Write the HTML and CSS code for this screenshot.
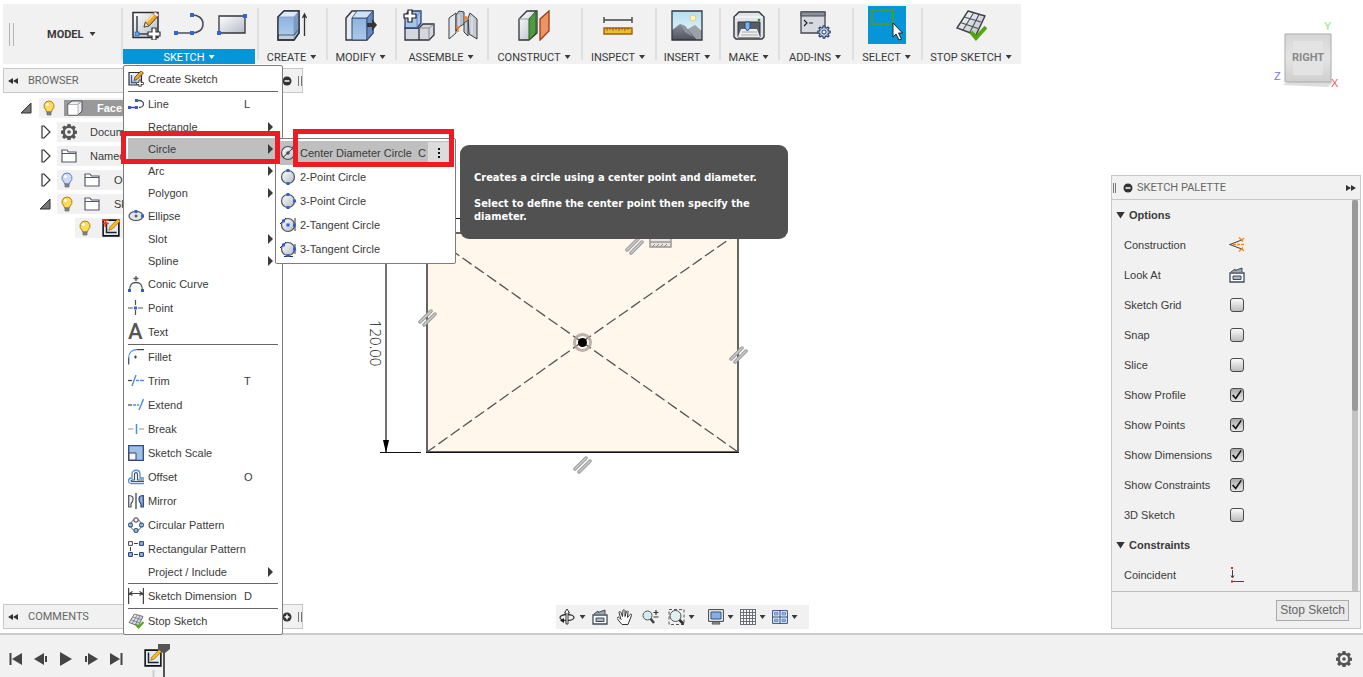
FILE: index.html
```html
<!DOCTYPE html>
<html lang="en">
<head>
<meta charset="utf-8">
<title>Sketch workspace</title>
<link rel="stylesheet" href="styles.css">
</head>
<body>
<svg class="sprite" aria-hidden="true">
  <defs>
    <linearGradient id="steel" x1="0" y1="0" x2="1" y2="1"><stop offset="0" stop-color="#fff"/><stop offset="1" stop-color="#b4bac6"/></linearGradient>
    <linearGradient id="blue" x1="0" y1="0" x2="0" y2="1"><stop offset="0" stop-color="#8fb3df"/><stop offset="1" stop-color="#a9c9e8"/></linearGradient>
    <linearGradient id="sky" x1="0" y1="0" x2="0" y2="1"><stop offset="0" stop-color="#b5def2"/><stop offset="1" stop-color="#eef8fb"/></linearGradient>
    <linearGradient id="rock" x1="0" y1="0" x2="0" y2="1"><stop offset="0" stop-color="#8a8f99"/><stop offset="1" stop-color="#4d515b"/></linearGradient>
    <symbol id="sketch" viewBox="0 0 30 30">
      <path d="M2 2.500h25v25H2z" fill="url(#steel)" stroke="#2c2f36" stroke-width="1.500"/>
      <path d="M6 6v18h13" fill="none" stroke="#39404c" stroke-width="1.500"/>
      <path d="M13 17l1.500-5L24 2l4 3-9.500 10.500z" fill="#f2a52b" stroke="#57401c"/>
      <path d="M15 12l9-9" stroke="#ffe08a" stroke-width="2"/><path d="M22 4l4 3 2-2-3.500-3z" fill="#eee" stroke="#8a5a4a" stroke-width=".6"/>
      <path d="M13 17l1.500-5 3.500 4z" fill="#f6dcc0" stroke="#333" stroke-width=".7"/>
      <rect x="4" y="22" width="4" height="4" fill="#5fa8ef" stroke="#1f5fae" stroke-width=".7"/>
      <path d="M21 18h4v4h4v4h-4v4h-4v-4h-4v-4h4z" fill="#fff" stroke="#333" stroke-width="1.200"/>
    </symbol>
    <symbol id="msketch" viewBox="0 0 16 16">
      <path d="M1 1.500h12.500V14H1z" fill="url(#steel)" stroke="#2c2f36" stroke-width="1.200"/>
      <path d="M3.500 4v7.500h5" fill="none" stroke="#2f5f9f" stroke-width="1.300"/>
      <path d="M6 9.500l1-3.500 6-6 2.500 2-6.500 6.500z" fill="#f2a52b" stroke="#57401c" stroke-width=".8"/>
      <path d="M11 9h2v2.500h2.500v2H13V16h-2v-2.500H8.500v-2H11z" fill="#fff" stroke="#333" stroke-width=".8"/>
    </symbol>
    <symbol id="line" viewBox="0 0 30 24">
      <path d="M2 20h16c6 0 11-3 11-9s-5-9-11-9" fill="none" stroke="#4a4d55" stroke-width="1.600"/>
      <path d="M0 18h4v4H0zM16 18h4v4h-4zM16 0h4v4h-4z" fill="#3565cf"/>
    </symbol>
    <symbol id="mline" viewBox="0 0 16 12">
      <path d="M1 9.500h8M8 2.500h3c3 0 4.500 2 4.500 3.500S14 9.500 11 9.500" fill="none" stroke="#4a4d55" stroke-width="1.300"/>
      <path d="M0 8h3v3H0zM7 8h3v3H7zM7 1h3v3H7z" fill="#3060cf"/>
    </symbol>
    <symbol id="rect" viewBox="0 0 30 24">
      <path d="M2 3h26v17H2z" fill="url(#steel)" stroke="#33363d" stroke-width="1.300"/><path d="M26 1h4v4h-4zM0 18h4v4H0z" fill="#3565cf"/>
    </symbol>
    <symbol id="create" viewBox="0 0 32 32">
      <path d="M2 8l6-6h15v22l-5 7H2z" fill="#c4cedd" stroke="#30343c" stroke-width="1.300"/>
      <path d="M2 8h16v17H2z" fill="url(#blue)"/><path d="M2 8l6-6h15l-5 6z" fill="#dbe9f8"/><path d="M18 8l5-6v20l-5 6z" fill="#7b9bc4"/>
      <path d="M2 8h16l5-6M18 8v22" fill="none" stroke="#8097b8" stroke-width=".8"/><path d="M2 26h16l5-6" fill="none" stroke="#405a86"/><path d="M2 8l6-6h15v22l-5 7H2z" fill="none" stroke="#30343c" stroke-width="1.300"/>
      <path d="M28.500 27V6m-2 3l2-4 2 4" fill="none" stroke="#333" stroke-width="1.300"/>
    </symbol>
    <symbol id="modify" viewBox="0 0 32 32">
      <path d="M1 9l6-7h21v22l-6 7H1z" fill="#e8ebf0" stroke="#30343c" stroke-width="1.400"/>
      <path d="M7 9h15v22H7z" fill="url(#blue)" stroke="#2c4775"/><path d="M7 9l5-7h16l-6 7z" fill="#cfe1f4" stroke="#2c4775" stroke-width=".8"/><path d="M22 9l6-7v22l-6 7z" fill="#6688bb" stroke="#2c4775" stroke-width=".8"/>
      <path d="M22 14h5v-4l5 6-5 6v-4h-5z" fill="#333"/>
    </symbol>
    <symbol id="assemble" viewBox="0 0 32 32">
      <path d="M2 19h14v12H2zM16 19l4-4h11v11l-5 5H16z" fill="#d4d7dd" stroke="#30343c" stroke-width="1.300"/>
      <path d="M16 19h10v12M26 19l5-4" fill="none" stroke="#777" stroke-width=".8"/>
      <path d="M2 19V6l4-4h12v12l-4 5z" fill="#a8c4e9" stroke="#29416f" stroke-width="1.300"/><path d="M14 7v12M14 7l4-5" stroke="#5b7cae" stroke-width=".8"/>
      <path d="M5 1h4v4h4v4H9v4H5V9H1V5h4z" fill="#fff" stroke="#222" stroke-width="1.200"/>
    </symbol>
    <symbol id="joint" viewBox="0 0 32 32">
      <path d="M2 9l7-5v20l-7 6z" fill="#e7eaed" stroke="#3a3d44"/><path d="M9 6l3-4 5 1v12l-5 3-3 4z" fill="#b9bfc9" stroke="#3a3d44"/>
      <path d="M17 14l4-3v16l-4-4zM21 9l2-5 7 6v20l-8-5z" fill="#c4cad3" stroke="#3a3d44"/><path d="M12 6v11M25 8v17" stroke="#fff" opacity=".7"/>
      <path d="M11 18v5m-2-5h4M19 7v5m-2-3h4" stroke="#fa7d13" stroke-width="1.600"/>
    </symbol>
    <symbol id="construct" viewBox="0 0 34 32">
      <path d="M2 10l8-8h10v22l-8 7H2z" fill="url(#steel)" stroke="#30343c" stroke-width="1.300"/><path d="M12 10l7-8v22l-7 7z" fill="#4f9b41" stroke="#295c22"/><path d="M2 10h10" stroke="#999"/>
      <path d="M23 10l9-8v20l-9 9z" fill="#ee9464" stroke="#9a3d14" stroke-width="1.300"/>
    </symbol>
    <symbol id="inspect" viewBox="0 0 32 32">
      <path d="M2 11h28M2 8v6m28-6v6" stroke="#444" stroke-width="1.400"/><path d="M2 19h28v6H2z" fill="#edbd2c" stroke="#9a6410" stroke-width="1.400"/><path d="M5 19v3m3-3v2m3-2v3m3-3v2m3-2v3m3-3v2m3-2v3m3-3v2" stroke="#76510c" stroke-width=".8"/>
    </symbol>
    <symbol id="insert" viewBox="0 0 32 32">
      <path d="M1 2h30v29H1z" fill="url(#sky)"/><path d="M17 20l7-4 7 6v9H14z" fill="#9ba1a9"/><path d="M1 21l8-6 5 2 12 14H1z" fill="url(#rock)"/><path d="M9 15l5 2 8 11-8-5z" fill="#9095a0"/>
      <path d="M1 2h30v29H1z" fill="none" stroke="#32363e" stroke-width="1.300"/><circle cx="22" cy="9" r="3" fill="#fff4bf" stroke="#eeca62"/>
    </symbol>
    <symbol id="make" viewBox="0 0 32 32">
      <path d="M1 8l5-5h20l5 5v20l-2 2H3l-2-2z" fill="#e1e3e7" stroke="#30343c" stroke-width="1.400"/><path d="M2 8h28" stroke="#fff"/><circle cx="26" cy="11" r="1.300" fill="#278f27"/>
      <path d="M5 13h22v15H5z" fill="#595d66" stroke="#30343c"/><path d="M8 20h16l3 8H5z" fill="#eee"/><path d="M9 23h15m-16 3h17" stroke="#999" stroke-width=".8"/><path d="M12 13h5v6l-2.500 3-2.500-3z" fill="#7bb2e7" stroke="#224e83"/>
    </symbol>
    <symbol id="addins" viewBox="0 0 32 32">
      <path d="M2 3h24v21H2z" fill="#d6d9df" stroke="#454850" stroke-width="1.300"/><path d="M2 3h24v4H2z" fill="#8a909c" stroke="#454850"/><path d="M5 11l3 3-3 3m5-3h4" fill="none" stroke="#222" stroke-width="1.200"/>
      <use href="#gearshape" x="18" y="16" width="14" height="14" fill="#b6cdea" stroke="#2c4266" stroke-width="1.500"/><circle cx="25" cy="23" r="2" fill="#fff" stroke="#2c4266"/>
    </symbol>
    <symbol id="gearshape" viewBox="-1 -1 18 18"><path d="M7 0h2l.5 2.300 1.600.7 2-1.400 1.400 1.400-1.400 2 .7 1.600L16 7v2l-2.200.5-.7 1.600 1.400 2-1.400 1.400-2-1.400-1.600.7L9 16H7l-.5-2.200-1.600-.7-2 1.400-1.400-1.400 1.400-2-.7-1.600L0 9V7l2.200-.4.7-1.600-1.400-2 1.400-1.400 2 1.400 1.600-.7z"/></symbol>
    <symbol id="gear" viewBox="0 0 16 16"><path fill-rule="evenodd" fill="#555" d="M6.500 0h3l.4 2.100 1.100.5 1.900-1.200 2 2-1.300 1.800.5 1.200 2 .3v3l-2 .4-.5 1.100 1.300 1.800-2 2-1.900-1.200-1.100.5-.4 2h-3l-.4-2-1.100-.5L3.100 15l-2-2 1.200-1.800-.5-1.100L0 9.700v-3l1.900-.4.5-1.100L1.100 3.400l2-2L5 2.600l1.100-.5zM8 4a4 4 0 1 0 0 8 4 4 0 0 0 0-8z"/><circle cx="8" cy="8" r="1.800" fill="#555"/></symbol>
    <symbol id="select" viewBox="0 0 38 38"><path d="M4 4h21v14H4z" fill="none" stroke="#5a9a14" stroke-width="1.500"/><path d="M25 17v14l3-3 3 6 2.500-1-3-6h4z" fill="#fff" stroke="#222"/></symbol>
    <symbol id="stop" viewBox="0 0 32 32">
      <path d="M13 2l17 5-9 19L2 19z" fill="url(#steel)" stroke="#3b3f46" stroke-width="1.400"/><path d="M9 8l17 5M5.500 13.500L23 19.500M18.500 4L8 21m16-15.500L14.500 24" stroke="#4b4f56" stroke-width="1.100"/><path d="M16 23l5 6L31 18" fill="none" stroke="#54a60c" stroke-width="4"/>
    </symbol>
    <symbol id="ellipse" viewBox="0 0 16 16"><ellipse cx="8" cy="8" rx="7" ry="4.500" fill="#e2e6ed" stroke="#4c5057" stroke-width="1.200"/><path d="M8 6.500v3M6.500 8h3" stroke="#333"/><path d="M6.500 2h3v3h-3zM13 6.500h3v3h-3z" fill="#3060cf"/></symbol>
    <symbol id="conic" viewBox="0 0 16 16"><path d="M1.500 14C2 8 4 6.500 8 6.500S14 8 14.500 14M8 0v5M5.500 2.500h5" fill="none" stroke="#4c5057" stroke-width="1.300"/><path d="M0 13h3v3H0zM13 13h3v3h-3z" fill="#3060cf"/></symbol>
    <symbol id="point" viewBox="0 0 16 16"><path d="M0 8h5m5 0h5M7.500 0v5m0 5v5" stroke="#4c5057" stroke-width="1.200"/><path d="M6 6.500h3v3H6z" fill="#3060cf"/></symbol>
    <symbol id="fillet" viewBox="0 0 16 16"><path d="M.7 15.500V9M9 .7h7M6 8h3M7.500 6.500v3" stroke="#444" stroke-width="1.200"/><path d="M.7 9C.7 4 4 .7 9 .7" fill="none" stroke="#4a90e2" stroke-width="1.300"/></symbol>
    <symbol id="trim" viewBox="0 0 16 16"><path d="M0 7.500h4" stroke="#444" stroke-width="1.200"/><path d="M8 2L4 13M8 7.500h3m1 0h4" stroke="#4a90e2" stroke-width="1.400"/></symbol>
    <symbol id="extend" viewBox="0 0 16 16"><path d="M0 8h4" stroke="#444" stroke-width="1.200"/><path d="M5 8h3m1 0h2M15.500 2L11 13" stroke="#4a90e2" stroke-width="1.400"/></symbol>
    <symbol id="break" viewBox="0 0 16 16"><path d="M0 8h5.500m5.500 0h5" stroke="#bbb" stroke-width="1.300"/><path d="M8.500 3v10" stroke="#4a90e2" stroke-width="1.500"/></symbol>
    <symbol id="scale" viewBox="0 0 16 16"><path d="M.7.700h14.600v14.600H.7z" fill="#9fc0e5" stroke="#2b4b7d" stroke-width="1.300"/><path d="M1 8h7v7H1z" fill="#f6f7f8" stroke="#444"/></symbol>
    <symbol id="offset" viewBox="0 0 16 16"><path d="M16 14.500H3.500c-4 0-4-5.500 0-5.500H4V5c0-5 8-5 8 0v4h4" fill="none" stroke="#4a90e2" stroke-width="1.300"/><path d="M16 12.500H4.500c-2 0-2-1.500 0-1.500H6.500V5.500c0-2.500 3-2.500 3 0V11H16" fill="none" stroke="#4c5057" stroke-width="1.200"/></symbol>
    <symbol id="mirror" viewBox="0 0 16 16"><path d="M8 0v16" stroke="#444" stroke-width="1.300"/><path d="M.7 2.500c4 0 5 2 4 5.500L3 11v3H.7z" fill="#f3f3f3" stroke="#4c5057" stroke-width="1.200"/><path d="M15.300 2.500c-4 0-5 2-4 5.500L13 11v3h2.300z" fill="#8fb1de" stroke="#29416f" stroke-width="1.200"/></symbol>
    <symbol id="circular" viewBox="0 0 16 16"><circle cx="8" cy="8" r="5.500" fill="none" stroke="#666"/><g stroke="#333"><rect x="6" y="1" width="4" height="4" rx="1" fill="#fff"/><g fill="#8fb7e8" stroke="#233c69"><rect x=".5" y="6" width="4" height="4" rx="1.500"/><rect x="11.500" y="6" width="4" height="4" rx="1.500"/><rect x="6" y="11.500" width="4" height="4" rx="1.500"/></g></g></symbol>
    <symbol id="rectangular" viewBox="0 0 16 16"><path d="M6 2.500h4M6 13.500h4M2.500 6v4" stroke="#444"/><path d="M.6.600h3.800v3.800H.6z" fill="#fff" stroke="#444"/><g fill="#8fb7e8" stroke="#233c69"><path d="M11.600.600h3.800v3.800h-3.800zM.6 11.600h3.800v3.800H.6zM11.600 11.600h3.800v3.800h-3.800z"/></g></symbol>
    <symbol id="dimension" viewBox="0 0 16 16"><path d="M.6 0v16M15.400 0v16M2 5.500h12M4.500 3.500l-3 2 3 2M11.500 3.500l3 2-3 2" fill="none" stroke="#444" stroke-width="1.200"/></symbol>
    <symbol id="circ" viewBox="0 0 16 16"><circle cx="8" cy="8" r="6.500" fill="url(#steel)" stroke="#4b4f57" stroke-width="1.200"/></symbol>
    <symbol id="c0" viewBox="0 0 16 16"><use href="#circ"/><path d="M3 12.500L13 3M8 6v4M6 8h4" stroke="#333"/><path d="M12 1.500h3v3h-3z" fill="#3060cf"/></symbol>
    <symbol id="c2" viewBox="0 0 16 16"><use href="#circ"/><path d="M6.500 0h3v3h-3zM6.500 13h3v3h-3z" fill="#3060cf"/></symbol>
    <symbol id="c3" viewBox="0 0 16 16"><use href="#circ"/><path d="M6.500 0h3v3h-3zM6.500 13h3v3h-3zM13 6.500h3v3h-3z" fill="#3060cf"/></symbol>
    <symbol id="t2" viewBox="0 0 16 16"><use href="#circ"/><path d="M15 1v13M0 7l6-6" stroke="#333"/><path d="M6.500 6.500h3v3h-3zM13 6.500h3v3h-3zM2 2.500h3v3H2z" fill="#3060cf"/></symbol>
    <symbol id="t3" viewBox="0 0 16 16"><use href="#circ"/><path d="M15 3v10M0 7l6-6M4 15.500h9" stroke="#333"/><path d="M6.500 13h3v3h-3zM13 6.500h3v3h-3zM2 2.500h3v3H2z" fill="#3060cf"/></symbol>
    <symbol id="bulb" viewBox="0 0 12 16"><path d="M6 1a5 5 0 0 1 3 9l-.5 2h-5L3 10a5 5 0 0 1 3-9z" fill="var(--glow)" stroke="var(--rim)"/><circle cx="4.500" cy="4.500" r="1.500" fill="#fff"/><path d="M4 12h4v3H4z" fill="#889" stroke="#555" stroke-width=".6"/></symbol>
    <symbol id="folder" viewBox="0 0 16 14"><path d="M1 3V1h5l1.500 2H15v10H1z" fill="#fff" stroke="#555b66" stroke-width="1.200"/><path d="M1 4.500h14" stroke="#555b66"/></symbol>
    <symbol id="body" viewBox="0 0 16 16"><path d="M1 4l4-3h10v10l-4 4H1z" fill="#eef0f3" stroke="#4b4f57"/><path d="M1 4.500h10V15h-10z" fill="#fff" stroke="#888" stroke-width=".6"/><path d="M11 4l4-3" stroke="#888"/></symbol>
    <symbol id="mini" viewBox="0 0 16 16"><path d="M1 1h14v14H1z" fill="#dcecf8" stroke="#111" stroke-width="1.400"/><path d="M4 3v9h9" fill="none" stroke="#222" stroke-width="1.300"/><path d="M6 10l1-3 7-7 2 2-7 7z" fill="#fdb81e" stroke="#ad6b0d" stroke-width=".7"/></symbol>
    <symbol id="lookat" viewBox="0 0 16 16"><path d="M1 6h14v9H1z" fill="#fff" stroke="#434b57" stroke-width="1.300"/><path d="M4 9h8v3.500H4z" fill="#a9b7c9" stroke="#434b57"/><path d="M2 5l4-3v1.500L13 1v4" fill="#9ca7b5" stroke="#434b57"/></symbol>
    <symbol id="construction" viewBox="0 0 16 16"><path d="M14 2.500L1 7.500l13 5" fill="none" stroke="#555" stroke-width="1.300"/><path d="M4 7.500h12" stroke="#fa8412" stroke-width="1.300" stroke-dasharray="3 1"/><path d="M10 .5l4 4M14 10.500l-4 4M15 1l-2 2M15 14l-2-2" stroke="#fa8412" stroke-width="1.300"/></symbol>
    <symbol id="coincident" viewBox="0 0 16 16"><path d="M3.500 3v7M2 8.500l1.500 2.500L5 8.500M4 14.500h11" fill="none" stroke="#444"/><path d="M2 0h2v2H2zM2 13.500h2v2H2z" fill="#f21b0c"/></symbol>
    <symbol id="orbit" viewBox="0 0 16 16"><ellipse cx="8" cy="8.500" rx="7" ry="3" fill="none" stroke="#333" stroke-width="1.300"/><path d="M7 15V4H5.500L8 0l2.500 4H9v11z" fill="#fff" stroke="#333"/><path d="M1 11.500l4-2.500v5z" fill="#222"/></symbol>
    <symbol id="hand" viewBox="0 0 16 16"><path d="M5 15L0 9c0-1 1-2 2-1l2 2L2 3c0-1 1.500-1.500 2 0l1.500 4L6 1c0-1 1.500-1 2 0v6l1.500-5c.5-1 2-.5 1.500.7L10.500 8 13 5c1-1 2 0 1.500 1L11 15z" fill="#fff" stroke="#333"/></symbol>
    <symbol id="zoom" viewBox="0 0 17 16"><path d="M8 9l4 5" stroke="#444" stroke-width="2.600"/><circle cx="5.500" cy="6.500" r="4.500" fill="#d7ebec" stroke="#555"/><path d="M11.500 3.500h5M14 1v5M11.500 8h5" stroke="#333" stroke-width="1.200"/></symbol>
    <symbol id="fit" viewBox="0 0 16 16"><path d="M.5.500h15v15H.5z" fill="none" stroke="#555" stroke-dasharray="3 2"/><path d="M10 10l5 5" stroke="#333" stroke-width="2.600"/><circle cx="7" cy="7" r="5.500" fill="#dff0ef" stroke="#555"/></symbol>
    <symbol id="display" viewBox="0 0 16 16"><path d="M.6.600h14.800v11.800H.6z" fill="#eee" stroke="#444"/><path d="M3 3h10v7H3z" fill="#88afe5" stroke="#315583"/><path d="M5 13h6l1 2H4z" fill="#aaa" stroke="#555"/></symbol>
    <symbol id="grid" viewBox="0 0 16 16"><path d="M.5.500h15v15H.5z" fill="#f7f7f7"/><path d="M.5 0v16M3.500 0v16M6.500 0v16M9.500 0v16M12.500 0v16M15.500 0v16M0 .5h16M0 3.500h16M0 6.500h16M0 9.500h16M0 12.500h16M0 15.500h16" stroke="#6a6e76"/></symbol>
    <symbol id="views" viewBox="0 0 16 14"><path d="M.6.600h14.800v12.800H.6z" fill="#e9eef5" stroke="#34517c"/><path d="M2.500 2.500h3.500v2.500H2.500zM10 2.500h3.500v2.500H10zM2.500 9h3.500v2.500H2.500zM10 9h3.500v2.500H10z" fill="#8fb4e0" stroke="#6d95c8"/><path d="M8 0v14M0 7h16" stroke="#34517c"/></symbol>
    <symbol id="parallel" viewBox="0 0 20 20"><g fill="none" stroke-linecap="round"><path d="M3 14L14 3M7 17L18 6" stroke="#999" stroke-width="3.500"/><path d="M3 14L14 3M7 17L18 6" stroke="#ccc" stroke-width="1.500"/></g></symbol>
    <symbol id="rewind" viewBox="0 0 10 6"><path d="M5 0v6L0 3zM10 0v6L5 3z" fill="#333"/></symbol>
    <symbol id="minus" viewBox="0 0 10 10"><circle cx="5" cy="5" r="4.500" fill="#333"/><path d="M2.500 5h5" stroke="#fff" stroke-width="1.500"/></symbol>
    <symbol id="plus" viewBox="0 0 10 10"><circle cx="5" cy="5" r="4.500" fill="#333"/><path d="M2.500 5h5M5 2.500v5" stroke="#fff" stroke-width="1.500"/></symbol>
    <symbol id="closed" viewBox="0 0 12 14"><path d="M3 1v12h2l6-6-6-6z" fill="#fff" stroke="#333" stroke-width="1.200"/></symbol>
    <symbol id="open" viewBox="0 0 12 12"><path d="M11 1v10H1z" fill="#777" stroke="#333"/></symbol>
  </defs>
</svg>

<div class="app">
  <main class="workspace">
    <svg class="drawing" role="img" aria-label="Sketch of a rectangle with a 120.00 dimension">
      <rect x="427" y="233" width="311" height="219" fill="#fff6ec" stroke="#333" stroke-width="1.500"/>
      <path d="M426 452.500h313" stroke="#111"/>
      <path d="M582 342L427 233M582 342L738 233M582 342L427 452M582 342L738 452" fill="none" stroke="#555" stroke-width="1.300" stroke-dasharray="11 4"/>
      <path d="M386 218.500h170M380 452.500h41" stroke="#111"/>
      <path d="M386 218v234" stroke="#444" stroke-width="1.500"/><path d="M383 440h6l-3 13z"/>
      <text class="dim" transform="translate(370 320) rotate(90)">120.00</text>
      <circle cx="582.500" cy="342.500" r="8" fill="none" stroke="#aaa29b" stroke-opacity=".8" stroke-width="3"/><circle cx="582.500" cy="342.500" r="4.500"/>
      <use href="#parallel" x="417" y="308" width="20" height="20"/><use href="#parallel" x="728" y="345" width="20" height="20"/><use href="#parallel" x="572" y="455" width="20" height="20"/><use href="#parallel" x="624" y="236" width="20" height="20"/>
      <path d="M650 236v11h21v-11M650 242h21" fill="#e8e4df" stroke="#999" stroke-width="1.500"/><path d="M652 247l3-3m1 3l3-3m1 3l3-3m1 3l3-3" stroke="#888"/>
    </svg>

    <header class="toolbar">
      <div class="group model"><span class="grip"></span><button class="mode">MODEL<i class="caret"></i></button></div>
      <div class="group sketching">
        <div class="icons"><svg width="30" height="30"><use href="#sketch"/></svg><svg width="30" height="24"><use href="#line"/></svg><svg width="30" height="24"><use href="#rect"/></svg></div>
        <button class="label active">SKETCH<i class="caret"></i></button>
        <ul class="menu">
          <li><button><svg><use href="#msketch"/></svg><span>Create Sketch</span></button></li>
          <li class="rule"><button><svg><use href="#mline"/></svg><span>Line</span><kbd>L</kbd></button></li>
          <li class="short"><button><span>Rectangle</span><i class="more"></i></button></li>
          <li class="short current"><button><span>Circle</span><i class="more"></i></button>
            <ul class="menu submenu">
              <li class="chosen"><button><svg><use href="#c0"/></svg><span>Center Diameter Circle</span><kbd>C</kbd><b class="dots"><i></i><i></i><i></i></b></button></li>
              <li><button><svg><use href="#c2"/></svg><span>2-Point Circle</span></button></li>
              <li><button><svg><use href="#c3"/></svg><span>3-Point Circle</span></button></li>
              <li><button><svg><use href="#t2"/></svg><span>2-Tangent Circle</span></button></li>
              <li><button><svg><use href="#t3"/></svg><span>3-Tangent Circle</span></button></li>
            </ul>
            <div class="tooltip" role="tooltip"><p>Creates a circle using a center point and diameter.</p><p>Select to define the center point then specify the diameter.</p></div>
          </li>
          <li class="short"><button><span>Arc</span><i class="more"></i></button></li>
          <li class="short"><button><span>Polygon</span><i class="more"></i></button></li>
          <li><button><svg><use href="#ellipse"/></svg><span>Ellipse</span></button></li>
          <li class="short"><button><span>Slot</span><i class="more"></i></button></li>
          <li class="short"><button><span>Spline</span><i class="more"></i></button></li>
          <li><button><svg><use href="#conic"/></svg><span>Conic Curve</span></button></li>
          <li><button><svg><use href="#point"/></svg><span>Point</span></button></li>
          <li><button><b class="letter">A</b><span>Text</span></button></li>
          <li class="rule"><button><svg><use href="#fillet"/></svg><span>Fillet</span></button></li>
          <li><button><svg><use href="#trim"/></svg><span>Trim</span><kbd>T</kbd></button></li>
          <li><button><svg><use href="#extend"/></svg><span>Extend</span></button></li>
          <li><button><svg><use href="#break"/></svg><span>Break</span></button></li>
          <li><button><svg><use href="#scale"/></svg><span>Sketch Scale</span></button></li>
          <li><button><svg><use href="#offset"/></svg><span>Offset</span><kbd>O</kbd></button></li>
          <li><button><svg><use href="#mirror"/></svg><span>Mirror</span></button></li>
          <li><button><svg><use href="#circular"/></svg><span>Circular Pattern</span></button></li>
          <li><button><svg><use href="#rectangular"/></svg><span>Rectangular Pattern</span></button></li>
          <li class="short"><button><span>Project / Include</span><i class="more"></i></button></li>
          <li class="rule"><button><svg><use href="#dimension"/></svg><span>Sketch Dimension</span><kbd>D</kbd></button></li>
          <li class="rule"><button><svg><use href="#stop"/></svg><span>Stop Sketch</span></button></li>
        </ul>
      </div>
      <div class="group"><div class="icons"><svg width="32" height="32"><use href="#create"/></svg></div><button class="label">CREATE<i class="caret"></i></button></div>
      <div class="group"><div class="icons"><svg width="32" height="32"><use href="#modify"/></svg></div><button class="label">MODIFY<i class="caret"></i></button></div>
      <div class="group"><div class="icons"><svg width="32" height="32"><use href="#assemble"/></svg><svg width="32" height="32"><use href="#joint"/></svg></div><button class="label">ASSEMBLE<i class="caret"></i></button></div>
      <div class="group"><div class="icons"><svg width="34" height="32"><use href="#construct"/></svg></div><button class="label">CONSTRUCT<i class="caret"></i></button></div>
      <div class="group"><div class="icons"><svg width="32" height="32"><use href="#inspect"/></svg></div><button class="label">INSPECT<i class="caret"></i></button></div>
      <div class="group"><div class="icons"><svg width="32" height="32"><use href="#insert"/></svg></div><button class="label">INSERT<i class="caret"></i></button></div>
      <div class="group"><div class="icons"><svg width="32" height="32"><use href="#make"/></svg></div><button class="label">MAKE<i class="caret"></i></button></div>
      <div class="group"><div class="icons"><svg width="32" height="32"><use href="#addins"/></svg></div><button class="label">ADD-INS<i class="caret"></i></button></div>
      <div class="group"><div class="icons"><svg class="tile" width="38" height="38"><use href="#select"/></svg></div><button class="label">SELECT<i class="caret"></i></button></div>
      <div class="group"><div class="icons"><svg width="32" height="32"><use href="#stop"/></svg></div><button class="label">STOP SKETCH<i class="caret"></i></button></div>
    </header>

    <aside class="side">
      <section>
        <h2 class="bar"><svg width="10" height="6"><use href="#rewind"/></svg><span>BROWSER</span><svg width="10" height="10"><use href="#minus"/></svg><i class="grip small"></i></h2>
        <ul class="tree">
          <li><svg width="12" height="12"><use href="#open"/></svg><div class="node"><svg class="bulb lit" width="12" height="16"><use href="#bulb"/></svg><div class="root"><svg width="18" height="16"><use href="#body"/></svg><b>Face</b></div></div></li>
          <li class="l1"><svg width="12" height="14"><use href="#closed"/></svg><div class="node"><svg width="16" height="16"><use href="#gear"/></svg><span class="far">Document</span></div></li>
          <li class="l1"><svg width="12" height="14"><use href="#closed"/></svg><div class="node"><svg width="16" height="14"><use href="#folder"/></svg><span class="far">Named</span></div></li>
          <li class="l1"><svg width="12" height="14"><use href="#closed"/></svg><div class="node"><svg class="bulb" width="12" height="16"><use href="#bulb"/></svg><svg width="16" height="14"><use href="#folder"/></svg><span>Origin</span></div></li>
          <li class="l1"><svg width="12" height="12"><use href="#open"/></svg><div class="node"><svg class="bulb lit" width="12" height="16"><use href="#bulb"/></svg><svg width="16" height="14"><use href="#folder"/></svg><span>Sketches</span></div></li>
          <li class="l2"><div class="node"><svg class="bulb lit" width="12" height="16"><use href="#bulb"/></svg><svg width="18" height="18" viewBox="0 0 16 16"><use href="#mini"/><path d="M0 1h6M1 4h5M3 1v6" stroke="#e33b12" stroke-width="1.500"/></svg></div></li>
        </ul>
      </section>
      <h2 class="bar"><svg width="10" height="6"><use href="#rewind"/></svg><span>COMMENTS</span><svg width="10" height="10"><use href="#plus"/></svg><i class="grip small"></i></h2>
    </aside>

    <nav class="navbar" aria-label="View">
      <svg width="18" height="16"><use href="#orbit"/></svg><i class="caret"></i>
      <svg width="16" height="16"><use href="#lookat"/></svg>
      <svg class="loose" width="16" height="17"><use href="#hand"/></svg>
      <svg class="loose" width="17" height="16"><use href="#zoom"/></svg>
      <svg class="loose" width="17" height="16"><use href="#fit"/></svg><i class="caret"></i>
      <svg class="apart" width="16" height="16"><use href="#display"/></svg><i class="caret"></i>
      <svg width="16" height="16"><use href="#grid"/></svg><i class="caret"></i>
      <svg width="16" height="14"><use href="#views"/></svg><i class="caret"></i>
    </nav>

    <svg class="cube" width="70" height="76" role="img" aria-label="View cube">
      <defs><linearGradient id="face" x1="0" y1="0" x2="0" y2="1"><stop offset="0" stop-color="#d6d6d6"/><stop offset=".5" stop-color="#e4e4e4"/><stop offset="1" stop-color="#cfcfcf"/></linearGradient></defs>
      <path d="M10 66l7-3h44l-5 5z" fill="#ddd"/><path d="M13 15h46v48H13z" fill="url(#face)" stroke="#aaa"/><path d="M21 22h30v34H21z" fill="#e3e3e3"/>
      <text x="36" y="42" text-anchor="middle" class="facename">RIGHT</text>
      <text x="52" y="11" fill="#8be38b">Y</text><text x="2" y="61" fill="#7777e8">Z</text><text x="59" y="68" fill="#ee5a5a">X</text>
    </svg>

    <section class="palette">
      <h2 class="bar"><i class="grip tiny"></i><svg width="10" height="10"><use href="#minus"/></svg><span>SKETCH PALETTE</span><svg class="flip" width="10" height="6"><use href="#rewind"/></svg></h2>
      <div class="body">
        <div class="options">
          <h3><i class="fold"></i>Options</h3>
          <div class="row"><span>Construction</span><svg width="16" height="16"><use href="#construction"/></svg></div>
          <div class="row"><span>Look At</span><svg width="16" height="16"><use href="#lookat"/></svg></div>
          <label class="row"><span>Sketch Grid</span><input type="checkbox"></label>
          <label class="row"><span>Snap</span><input type="checkbox"></label>
          <label class="row"><span>Slice</span><input type="checkbox"></label>
          <label class="row"><span>Show Profile</span><input type="checkbox" checked></label>
          <label class="row"><span>Show Points</span><input type="checkbox" checked></label>
          <label class="row"><span>Show Dimensions</span><input type="checkbox" checked></label>
          <label class="row"><span>Show Constraints</span><input type="checkbox" checked></label>
          <label class="row"><span>3D Sketch</span><input type="checkbox"></label>
          <h3><i class="fold"></i>Constraints</h3>
          <div class="row"><span>Coincident</span><svg width="16" height="16"><use href="#coincident"/></svg></div>
        </div>
        <div class="track"><div class="thumb"></div></div>
      </div>
      <div class="foot"><button class="stop">Stop Sketch</button></div>
    </section>
  </main>

  <footer class="timeline">
    <button aria-label="Go to start"><svg width="14" height="14"><path d="M1.500 1v12" stroke="#444" stroke-width="2"/><path d="M13 1v12L3 7z" fill="#444"/></svg></button>
    <button aria-label="Step back"><svg width="14" height="14"><path d="M10 1v12L0 7z" fill="#444"/><path d="M12 4v6" stroke="#444" stroke-width="2"/></svg></button>
    <button aria-label="Play"><svg width="14" height="14"><path d="M1 0v14l12-7z" fill="#444"/></svg></button>
    <button aria-label="Step forward"><svg width="14" height="14"><path d="M4 1v12l10-6z" fill="#444"/><path d="M2 4v6" stroke="#444" stroke-width="2"/></svg></button>
    <button aria-label="Go to end"><svg width="14" height="14"><path d="M12.500 1v12" stroke="#444" stroke-width="2"/><path d="M1 1v12l10-6z" fill="#444"/></svg></button>
    <svg class="track-mark" width="28" height="42"><use href="#mini" y="14" width="18" height="18"/><path d="M9.500 35v7" stroke="#ccc" stroke-width="2"/><path d="M14 9h12v5l-5 4h-2l-5-4z" fill="#555"/><path d="M20 16v26" stroke="#555" stroke-width="2"/></svg>
    <button class="settings" aria-label="Settings"><svg width="16" height="16"><use href="#gear"/></svg></button>
  </footer>
</div>
</body>
</html>
```
FILE: styles.css
```css
*, *::before, *::after { box-sizing: border-box; }
body { margin: 0; background: #fff; color: #3a3a3a; font: 11px/14px "Liberation Sans", Arial, sans-serif; }
button { margin: 0; padding: 0; border: 0; background: none; color: inherit; font: inherit; }
ul { margin: 0; padding: 0; list-style: none; }
h2, h3, p { margin: 0; font-size: 11px; }
svg { display: block; flex: none; }
.sprite { position: absolute; width: 0; height: 0; }

.app { display: flex; flex-direction: column; height: 100vh; overflow: hidden; }
.workspace { position: relative; flex: 1; min-height: 0; display: grid; grid-template-columns: 300px 1fr 250px; grid-template-rows: auto minmax(0, 1fr); padding: 4px 2px 4px 3px; }
.drawing { position: absolute; left: 0; top: 0; width: 100%; height: 100%; }
.dim { font: 300 15px "Open Sans", sans-serif; fill: #111; }

.toolbar { position: relative; z-index: 3; grid-column: 1 / -1; justify-self: start; display: grid; grid-template-columns: 118px 136px 69px 69px 92px 94px 74px 64px 59px 74px 69px 100px; height: 60px; background: #f1f1f1; }
.group { position: relative; display: flex; flex-direction: column; align-items: center; }
.group + .group { background: linear-gradient(#dfdfdf, #dfdfdf) 0 4px / 2px 52px no-repeat; }
.icons { display: flex; align-items: center; justify-content: center; gap: 12px; height: 42px; margin-bottom: 3px; }
.sketching .icons { gap: 13px; }
.toolbar .tile { background: #0696d7; }
.label, .mode { display: flex; align-items: center; justify-content: center; gap: 4px; height: 15px; font: 11px/15px Roboto, sans-serif; white-space: nowrap; }
.label { padding-top: 1px; }
.label.active { width: 132px; background: #0696d7; color: #fff; }
.caret { width: 6px; height: 4px; background: currentColor; clip-path: polygon(0 0, 100% 0, 50% 100%); }
.model { flex-direction: row; gap: 33px; padding-left: 6px; }
.mode { gap: 6px; font-weight: 700; }
.grip { width: 5px; height: 23px; border: solid #b5b5b5; border-width: 0 1px; }
.grip.small { height: 10px; width: 4px; border-color: #777; }
.grip.tiny { width: 3px; height: 10px; border-color: #777; }

.menu { position: absolute; left: 2px; top: 61px; width: 160px; padding: 1px 0; border: 1px solid #7d7d7d; border-radius: 2px; background: #fff; }
.menu li { position: relative; }
.menu button { display: flex; align-items: center; width: 100%; height: 24px; padding-left: 4px; text-align: left; white-space: nowrap; }
.menu svg { width: 16px; height: 16px; margin-right: 4px; }
.menu span { flex: 1; }
.menu kbd { width: 38px; margin-left: -30px; font: inherit; }
.menu .short > button { height: 22px; padding-left: 24px; }
.menu .rule::before { content: ""; display: block; height: 1px; margin: 0 4px; background: #666; }
.more { width: 5px; height: 10px; margin-right: 9px; background: #3a3a3a; clip-path: polygon(0 0, 100% 50%, 0 100%); }
.letter { width: 16px; margin-right: 4px; font: 500 22px/24px Roboto, sans-serif; color: #555; }
.menu .current { z-index: 1; }
.current > button { background: linear-gradient(#bfbfbf, #bfbfbf) 4px 0 / 148px 22px no-repeat; }
.current::after, .chosen::after { content: ""; position: absolute; z-index: 2; border: 5px solid #ed1c24; pointer-events: none; }
.current::after { left: -3px; top: -7px; width: 159px; height: 33px; }
.chosen::after { left: 17px; top: -12px; width: 161px; height: 38px; }
.menu .submenu { left: 151px; top: 0; width: 181px; padding: 2px 0; z-index: 1; }
.chosen button { background: linear-gradient(#bfbfbf, #bfbfbf) 4px 0 / 172px 24px no-repeat; }
.chosen kbd { width: 10px; margin: 0; }
.dots { display: flex; flex-direction: column; align-items: center; justify-content: center; gap: 2px; width: 22px; height: 22px; margin-right: 5px; background: #dcdcdc; }
.dots i { width: 2px; height: 2px; background: #111; }
.tooltip { position: absolute; z-index: 3; left: 336px; top: 7px; width: 328px; padding: 26px 14px 16px; border-radius: 9px; background: #515151; color: #fff; font: 700 11px/13px "DejaVu Sans Condensed", "Noto Sans", sans-serif; }
.tooltip p + p { margin-top: 13px; }

.side { position: relative; grid-column: 1; grid-row: 2; display: flex; flex-direction: column; justify-content: space-between; padding-top: 4px; }
.bar { display: flex; align-items: center; gap: 10px; height: 25px; padding: 0 0 0 4px; border: 1px solid #c8c8c8; background: #f1f1f1; color: #666; font: 11px/14px Roboto, sans-serif; }
.bar span { flex: 1; }
.bar .small { margin-left: -4px; }
.tree { width: 270px; padding-top: 3px; }
.tree li { display: flex; align-items: center; gap: 7px; height: 24px; padding-left: 17px; white-space: nowrap; }
.tree .l1 { gap: 6px; padding-left: 36px; }
.tree .l2 { padding-left: 72px; }
.node { flex: 1; display: flex; align-items: center; gap: 11px; height: 20px; padding-left: 4px; background: #f1f1f1; }
.node .far { margin-left: 2px; }
.l1 .bulb ~ span { margin-left: 3px; }
.root { flex: 1; display: flex; align-items: center; gap: 13px; height: 16px; margin-left: -2px; padding-left: 2px; background: #999; color: #fff; }
.bulb { --glow: #cbdcf8; --rim: #6980ae; }
.lit { --glow: #ffdb57; --rim: #a78224; }

.navbar { position: relative; grid-column: 1 / -1; grid-row: 2; align-self: end; justify-self: center; display: flex; align-items: center; gap: 6px; height: 24px; padding: 0 11px 0 2px; background: #f1f1f1; }
.navbar .caret { margin-left: -2px; }
.navbar .loose { margin-left: 3px; }
.navbar .apart { margin-left: 7px; }

.cube { position: absolute; right: 21px; top: 19px; font: 11px "Liberation Sans", Arial, sans-serif; }
.facename { font: 700 11px Roboto, sans-serif; fill: #8a8a8a; }

.palette { position: relative; grid-column: 3; grid-row: 2; display: flex; flex-direction: column; margin-top: 111px; border: 1px solid #c8c8c8; background: #f1f1f1; }
.palette .bar { gap: 4px; flex: none; height: 24px; padding: 0 4px 0 1px; border-width: 0 0 1px; }
.palette .bar .tiny { margin-right: 3px; }
.flip { transform: scaleX(-1); }
.body { flex: 1; min-height: 0; display: flex; overflow: hidden; }
.options { flex: 1; }
.options h3, .row { display: flex; align-items: center; height: 30px; }
.options h3 { gap: 4px; padding-left: 4px; }
.fold { width: 9px; height: 7px; background: #333; clip-path: polygon(0 0, 100% 0, 50% 100%); }
.row { padding-left: 12px; }
.row span { width: 105px; }
.row input { appearance: none; position: relative; width: 14px; height: 14px; margin: 0 1px; border: 1px solid #4a4a4a; border-radius: 3px; background: linear-gradient(#fafafa, #bcbcbc); }
.row input:checked { background: linear-gradient(#aaa, #e8e8e8); }
.row input:checked::after { content: ""; position: absolute; inset: 1px; background: #111; clip-path: polygon(0 55%, 14% 44%, 35% 72%, 85% 0, 98% 8%, 38% 98%); }
.track { width: 6px; margin-right: 2px; background: #c3c3c3; }
.thumb { height: 54%; border-radius: 3px; background: #999; }
.foot { flex: none; display: flex; align-items: center; justify-content: flex-end; height: 37px; padding-right: 11px; border-top: 1px solid #c0c0c0; }
.stop { height: 21px; padding: 0 3px; border: 1px solid #aaa; background: #e9e9e9; color: #666; font-size: 12px; line-height: 19px; }

.timeline { flex: none; display: flex; align-items: center; gap: 11px; height: 44px; padding: 0 11px 0 9px; border-top: 2px solid #ccc; background: #f1f1f1; }
.timeline > button { padding-top: 5px; }
.track-mark { margin-left: 10px; }
.timeline .settings { margin-left: auto; }
```
